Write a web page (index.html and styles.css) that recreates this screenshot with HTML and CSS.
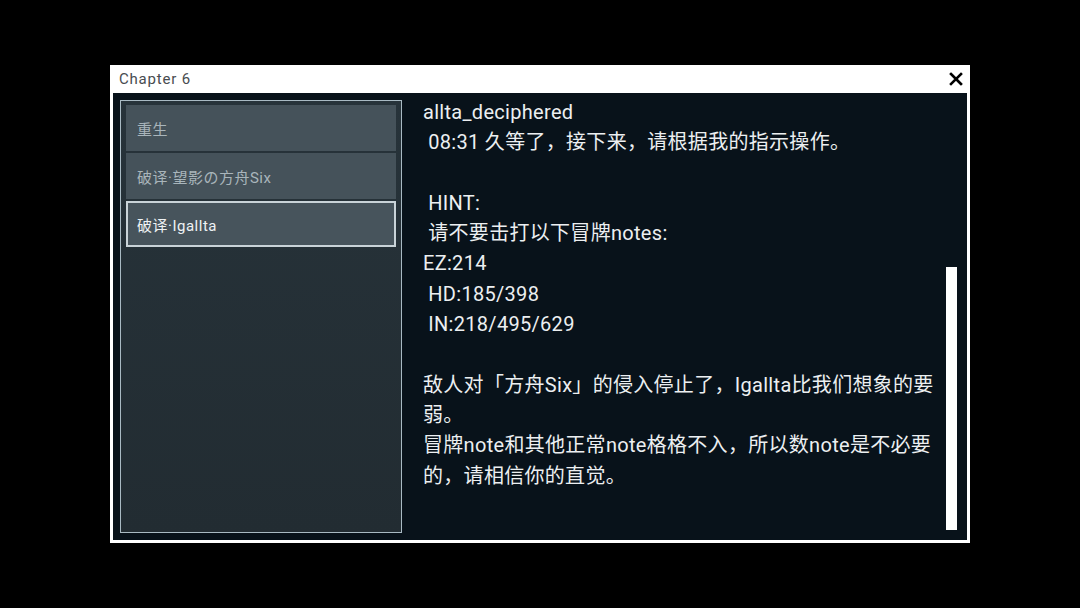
FILE: index.html
```html
<!DOCTYPE html>
<html lang="zh">
<head>
<meta charset="utf-8">
<title>Chapter 6</title>
<link rel="stylesheet" href="styles.css">
</head>
<body>
<div class="stage">
  <div class="window">
    <div class="titlebar">
      <span class="title">Chapter 6</span>
      <span class="close">
        <svg width="14" height="14" viewBox="0 0 14 14"><path d="M2 2 L12 12 M12 2 L2 12" stroke="#000" stroke-width="2.6" stroke-linecap="square"/></svg>
      </span>
    </div>
    <div class="body">
      <div class="list">
        <div class="item">重生</div>
        <div class="item">破译·望影の方舟Six</div>
        <div class="item selected">破译·Igallta</div>
      </div>
      <div class="content">
        <div class="text">
          <p>allta_deciphered</p>
          <p>&nbsp;08:31 久等了，接下来，请根据我的指示操作。</p>
          <p>&nbsp;</p>
          <p>&nbsp;HINT:</p>
          <p>&nbsp;请不要击打以下冒牌notes:</p>
          <p>EZ:214</p>
          <p>&nbsp;HD:185/398</p>
          <p>&nbsp;IN:218/495/629</p>
          <p>&nbsp;</p>
          <p>敌人对「方舟Six」的侵入停止了，Igallta比我们想象的要弱。</p>
          <p>冒牌note和其他正常note格格不入，所以数note是不必要的，请相信你的直觉。</p>
        </div>
        <div class="track"><div class="thumb"></div></div>
      </div>
    </div>
  </div>
</div>
</body>
</html>
```
FILE: styles.css
```css
html, body {
  margin: 0;
  padding: 0;
  background: #000;
}
.stage {
  width: 1080px;
  height: 608px;
  display: flex;
  align-items: center;
  justify-content: center;
}
.window {
  width: 860px;
  height: 478px;
  box-sizing: border-box;
  background: #fff;
  padding: 0 3px 3px 3px;
  display: flex;
  flex-direction: column;
}
.titlebar {
  height: 28px;
  display: flex;
  align-items: center;
  justify-content: space-between;
  padding: 0 4px 0 6px;
}
.title {
  font-family: "Roboto", "Noto Sans", sans-serif;
  font-size: 15px;
  color: #484c50;
  letter-spacing: 0.8px;
}
.close {
  display: flex;
  width: 14px;
  height: 14px;
}
.body {
  flex: 1;
  display: flex;
  background: #08121a;
  min-height: 0;
}
.list {
  margin: 7px 0 7px 7px;
  width: 282px;
  box-sizing: border-box;
  border: 1px solid #a9bac3;
  background: linear-gradient(180deg, #27333a 0%, #222c32 100%);
  padding: 4px 5px;
  display: flex;
  flex-direction: column;
  gap: 2px;
}
.item {
  height: 46px;
  box-sizing: border-box;
  background: #45525a;
  display: flex;
  align-items: center;
  padding-left: 11px;
  font-family: "Roboto", "Noto Sans CJK SC", sans-serif;
  font-size: 15px;
  letter-spacing: 0.5px;
  color: #a9b5bb;
}
.item.selected {
  border: 2px solid #c9d3d8;
  padding-left: 9px;
  background: #47545c;
  color: #eef2f4;
}
.content {
  flex: 1;
  display: flex;
  min-width: 0;
}
.text {
  flex: 1;
  padding: 4px 4px 0 21px;
  font-family: "Roboto", "Noto Sans CJK SC", sans-serif;
  font-size: 20px;
  letter-spacing: 0.3px;
  line-height: 30.3px;
  color: #eceff1;
}
.text p {
  margin: 0;
}
.track {
  width: 11px;
  margin-right: 10px;
  padding: 174px 0 10px 0;
  display: flex;
}
.thumb {
  flex: 1;
  background: #fff;
}
```
